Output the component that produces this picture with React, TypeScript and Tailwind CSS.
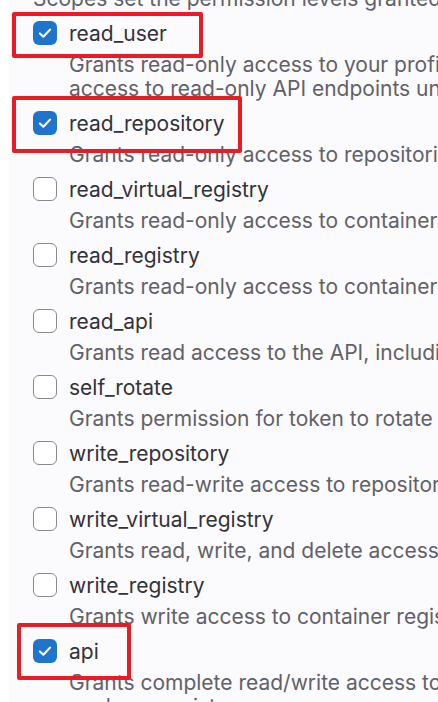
import React from "react";

type Item = { name: string; checked?: boolean; desc: string[] };

const items: Item[] = [
  {
    name: "read_user",
    checked: true,
    desc: [
      "Grants read-only access to your profile through the /user API endpoint, which includes username, public email, and full name. Also grants",
      "access to read-only API endpoints under /users.",
    ],
  },
  { name: "read_repository", checked: true, desc: ["Grants read-only access to repositories on private projects using Git-over-HTTP or the Repository Files API."] },
  { name: "read_virtual_registry", desc: ["Grants read-only access to container images through the dependency proxy."] },
  { name: "read_registry", desc: ["Grants read-only access to container registry images on private projects."] },
  { name: "read_api", desc: ["Grants read access to the API, including all groups and projects, the container registry, and the package registry."] },
  { name: "self_rotate", desc: ["Grants permission for token to rotate itself."] },
  { name: "write_repository", desc: ["Grants read-write access to repositories on private projects using Git-over-HTTP (not using the API)."] },
  { name: "write_virtual_registry", desc: ["Grants read, write, and delete access to container images through the dependency proxy."] },
  { name: "write_registry", desc: ["Grants write access to container registry images on private projects."] },
  {
    name: "api",
    checked: true,
    desc: [
      "Grants complete read/write access to the API, including all groups and projects, the container registry, the dependency proxy, and the",
      "package registry.",
    ],
  },
];

function Checkbox({ checked }: { checked?: boolean }) {
  if (checked) {
    return (
      <div className="w-[24px] h-[24px] rounded-[6px] bg-[#1f75cb] flex items-center justify-center shrink-0">
        <svg width="18" height="18" viewBox="0 0 16 16" fill="none">
          <polyline points="3.5,8.5 6.5,11.3 12.5,5" stroke="white" strokeWidth="1.9" strokeLinecap="round" strokeLinejoin="round" />
        </svg>
      </div>
    );
  }
  return <div className="w-[24px] h-[24px] rounded-[6px] border border-[#89888d] bg-white shrink-0" />;
}

export default function App() {
  return (
    <div
      className="relative w-[438px] h-[702px] overflow-hidden bg-white"
      style={{ fontFamily: "Inter, 'Noto Sans', sans-serif" }}
    >
      <div className="ml-[9px] h-full bg-[#fbfafd] pl-[24px] overflow-hidden">
        <div className="mt-[-13px] text-[21px] leading-[24px] text-[#626168] whitespace-nowrap">
          Scopes set the permission levels granted to the token.
        </div>
        <div className="flex flex-col gap-[9px] mt-[9px]">
          {items.map((it) => (
            <div key={it.name} className="flex gap-[12px]">
              <div className="pt-[1px]">
                <Checkbox checked={it.checked} />
              </div>
              <div className="flex flex-col gap-[5px]">
                <div className="text-[21px] leading-[28px] text-[#333238] whitespace-nowrap">{it.name}</div>
                <div className="text-[21px] leading-[24px] text-[#626168]">
                  {it.desc.map((d, i) => (
                    <div key={i} className="whitespace-nowrap">
                      {d}
                    </div>
                  ))}
                </div>
              </div>
            </div>
          ))}
        </div>
      </div>
      <div className="absolute left-[12px] top-[12px] w-[191px] h-[46px] border-[4px] border-[#e91c26] rounded-[2px]" />
      <div className="absolute left-[12px] top-[96px] w-[230px] h-[57px] border-[4px] border-[#e91c26] rounded-[2px]" />
      <div className="absolute left-[17px] top-[623px] w-[114px] h-[57px] border-[4px] border-[#e91c26] rounded-[2px]" />
    </div>
  );
}
